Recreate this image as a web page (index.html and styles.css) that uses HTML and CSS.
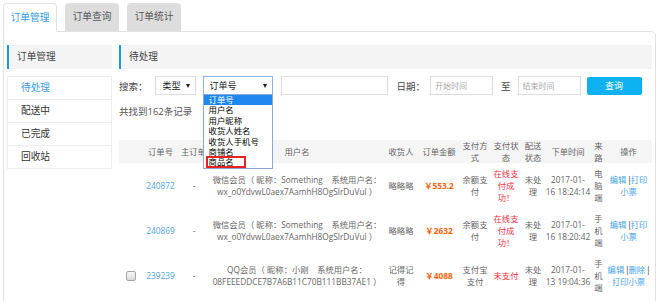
FILE: index.html
```html
<!DOCTYPE html>
<html>
<head>
  <title>订单管理</title>
  <link rel="stylesheet" href="styles.css">
</head>
<body>
  <div class="tabs">
    <a class="tab active" href="#">订单管理</a>
    <a class="tab" href="#">订单查询</a>
    <a class="tab" href="#">订单统计</a>
  </div>

  <div class="panel">
    <aside class="side">
      <div class="box-title">订单管理</div>
      <ul class="side-menu">
        <li class="active">待处理</li>
        <li>配送中</li>
        <li>已完成</li>
        <li>回收站</li>
      </ul>
    </aside>

    <main class="main">
      <div class="box-title">待处理</div>

      <div class="search-row">
        <span class="label search-label">搜索：</span>
        <div class="select type-select">类型<i class="caret"></i></div>
        <div class="select-wrap">
          <div class="select field-select">订单号<i class="caret"></i></div>
          <ul class="dropdown">
            <li class="selected">订单号</li>
            <li>用户名</li>
            <li>用户昵称</li>
            <li>收货人姓名</li>
            <li>收货人手机号</li>
            <li>商铺名</li>
            <li>商品名<span class="mark"></span></li>
          </ul>
        </div>
        <input class="input keyword" type="text">
        <span class="label date-label">日期：</span>
        <input class="input date" type="text" placeholder="开始时间">
        <span class="label to-label">至</span>
        <input class="input date" type="text" placeholder="结束时间">
        <button class="btn query-btn">查询</button>
      </div>

      <div class="count-row">
        <span>共找到162条记录</span>
        <button class="btn batch-btn">批量删除</button>
      </div>

      <table class="orders">
        <colgroup>
          <col style="width:24px">
          <col style="width:35px">
          <col style="width:32px">
          <col style="width:174px">
          <col style="width:34px">
          <col style="width:42px">
          <col style="width:30px">
          <col style="width:32px">
          <col style="width:22px">
          <col style="width:48px">
          <col style="width:13px">
          <col style="width:47px">
        </colgroup>
        <thead>
          <tr>
            <th></th>
            <th>订单号</th>
            <th class="nowrap">主订单号</th>
            <th>用户名</th>
            <th>收货人</th>
            <th>订单金额</th>
            <th>支付方式</th>
            <th>支付状态</th>
            <th>配送状态</th>
            <th>下单时间</th>
            <th>来路</th>
            <th>操作</th>
          </tr>
        </thead>
        <tbody>
          <tr>
            <td></td>
            <td><a class="link" href="#">240872</a></td>
            <td>-</td>
            <td>微信会员（ 昵称：Something&nbsp;&nbsp;&nbsp; 系统用户名：<br>wx_o0YdvwL0aex7AamhH8OgSlrDuVul ）</td>
            <td>略略略</td>
            <td class="money">￥553.2</td>
            <td>余额支付</td>
            <td class="status">在线支付成功！</td>
            <td>未处理</td>
            <td class="time">2017-01-<br>16 18:24:14</td>
            <td>电脑端</td>
            <td><a class="link" href="#">编辑</a> <span class="sep">|</span><a class="link" href="#">打印小票</a></td>
          </tr>
          <tr>
            <td></td>
            <td><a class="link" href="#">240869</a></td>
            <td>-</td>
            <td>微信会员（ 昵称：Something&nbsp;&nbsp;&nbsp; 系统用户名：<br>wx_o0YdvwL0aex7AamhH8OgSlrDuVul ）</td>
            <td>略略略</td>
            <td class="money">￥2632</td>
            <td>余额支付</td>
            <td class="status">在线支付成功！</td>
            <td>未处理</td>
            <td class="time">2017-01-<br>16 18:20:42</td>
            <td>手机端</td>
            <td><a class="link" href="#">编辑</a> <span class="sep">|</span><a class="link" href="#">打印小票</a></td>
          </tr>
          <tr>
            <td><input class="chk" type="checkbox"></td>
            <td><a class="link" href="#">239239</a></td>
            <td>-</td>
            <td>QQ会员（ 昵称：小刚&nbsp;&nbsp;&nbsp; 系统用户名：<br>08FEEEDDCE7B7A6B11C70B111BB37AE1 ）</td>
            <td>记得记得</td>
            <td class="money">￥4088</td>
            <td>支付宝支付</td>
            <td class="status">未支付</td>
            <td>未处理</td>
            <td class="time">2017-01-<br>13 19:04:36</td>
            <td>手机端</td>
            <td><a class="link" href="#">编辑</a> <span class="sep">|</span><a class="link" href="#">删除</a> <span class="sep">|</span><a class="link" href="#">打印小票</a></td>
          </tr>
        </tbody>
      </table>
    </main>
  </div>
</body>
</html>
```

FILE: styles.css
```css
* {
  box-sizing: border-box;
}

body {
  margin: 0;
  font-family: "Open Sans", "Noto Sans CJK SC", sans-serif;
  font-size: 9.6px;
  color: #444;
  background: #fff;
}

/* tabs */
.tabs {
  display: flex;
  align-items: flex-start;
  gap: 8px;
  height: 31px;
  padding: 3px 0 0 3px;
  position: relative;
  z-index: 1;
}

.tab {
  width: 54px;
  height: 28px;
  line-height: 28px;
  text-align: center;
  background: #dddddd;
  color: #555;
  border-radius: 4px 4px 0 0;
  text-decoration: none;
  font-size: 9.7px;
}

.tab.active {
  height: 29px;
  line-height: 27px;
  background: #fff;
  color: #2f9be6;
  border: 1px solid #e2e2e2;
  border-bottom-color: #fff;
}

/* panel */
.panel {
  display: flex;
  align-items: flex-start;
  gap: 7px;
  width: 653px;
  margin-left: 3px;
  padding: 13px 3px 20px 3px;
  border: 1px solid #e2e2e2;
  border-top-right-radius: 5px;
}

.box-title {
  height: 24px;
  line-height: 24px;
  padding-left: 8px;
  background: #f4f4f4;
  border-left: 2px solid #1c9ae8;
  font-size: 9.7px;
  color: #444;
}

.side {
  flex: none;
  width: 105px;
}

.side-menu {
  list-style: none;
  margin: 7px 0 0;
  padding: 0;
  border: 1px solid #eeeeee;
  border-bottom: none;
}

.side-menu li {
  height: 23px;
  line-height: 22px;
  padding-left: 13px;
  border-bottom: 1px solid #eeeeee;
  font-size: 9.7px;
  color: #333;
}

.side-menu li.active {
  color: #3a9ee6;
}

.main {
  flex: none;
  width: 533px;
}

/* search */
.search-row {
  display: flex;
  align-items: center;
  height: 19px;
  margin-top: 7px;
  font-size: 9.5px;
}

.label {
  color: #444;
}

.search-label {
  margin-right: 7px;
}

.select {
  display: flex;
  align-items: center;
  justify-content: space-between;
  height: 19px;
  padding: 0 5px 0 7px;
  border: 1px solid #dddddd;
  background: #fff;
  color: #222;
  font-size: 9px;
}

.type-select {
  width: 41px;
}

.select-wrap {
  position: relative;
  margin-left: 7px;
}

.field-select {
  width: 70px;
  padding-left: 6px;
  border-color: #86b3e8;
}

.caret {
  width: 0;
  height: 0;
  border-left: 2.5px solid transparent;
  border-right: 2.5px solid transparent;
  border-top: 4px solid #222;
}

.dropdown {
  position: absolute;
  top: 18px;
  left: 0;
  z-index: 5;
  width: 70px;
  margin: 0;
  padding: 0;
  list-style: none;
  background: #fff;
  border: 1px solid #88a9d8;
}

.dropdown li {
  position: relative;
  height: 10.4px;
  line-height: 10.4px;
  padding-left: 5px;
  font-size: 8.4px;
  color: #000;
}

.dropdown li.selected {
  background: #1e88f0;
  color: #fff;
}

.dropdown .mark {
  position: absolute;
  left: 2px;
  top: -1px;
  width: 40px;
  height: 12px;
  border: 2px solid #e8231f;
}

.input {
  height: 19px;
  border: 1px solid #dddddd;
  padding: 0 4px;
  font-family: inherit;
  font-size: 8px;
  outline: none;
}

.input::placeholder {
  color: #aaa;
}

.keyword {
  width: 107px;
  margin: 0 9px 0 8px;
}

.date-label {
  margin-right: 5px;
}

.date {
  width: 63px;
}

.to-label {
  margin: 0 7px 0 8px;
}

.btn {
  height: 18px;
  border: none;
  border-radius: 2px;
  background: #0db1ef;
  color: #fff;
  font-family: inherit;
  font-size: 9px;
  cursor: pointer;
}

.query-btn {
  width: 55px;
  margin-left: 6px;
}

.count-row {
  display: flex;
  align-items: center;
  gap: 12px;
  height: 18px;
  margin-top: 7px;
  font-size: 9.5px;
  color: #555;
}

.batch-btn {
  width: 60px;
}

/* table */
.orders {
  width: 533px;
  margin-top: 20px;
  border-collapse: collapse;
  table-layout: fixed;
  font-size: 8.3px;
  line-height: 12px;
  color: #666;
}

.orders thead tr {
  background: #f5f5f5;
}

.orders th {
  height: 23px;
  padding: 0 1px;
  font-weight: normal;
  line-height: 11.5px;
  color: #666;
  text-align: center;
  vertical-align: middle;
}

.orders th.nowrap {
  white-space: nowrap;
  text-align: left;
  padding-left: 3px;
}

.orders td {
  height: 45px;
  padding: 4px 1px;
  text-align: center;
  vertical-align: middle;
}

.link {
  color: #4aa5ea;
  text-decoration: none;
}

.money {
  color: #ff6310;
  font-weight: bold;
}

.status {
  color: #ff2d3a;
}

.time {
  white-space: nowrap;
}

.sep {
  font-family: "Liberation Sans", sans-serif;
  color: #555;
}

.chk {
  appearance: none;
  width: 10px;
  height: 10px;
  margin: 0;
  vertical-align: middle;
  border: 1px solid #a6a6a6;
  border-radius: 2px;
  background: linear-gradient(#f6f6f6, #dcdcdc);
}
```
